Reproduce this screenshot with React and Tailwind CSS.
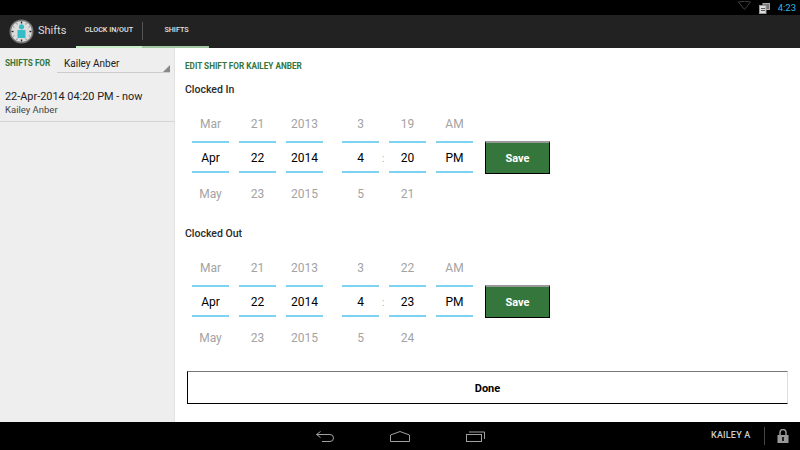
const font = { fontFamily: "Roboto, sans-serif" };

const majorTicks = [0, 90, 180, 270];
const minorTicks = [30, 60, 120, 150, 210, 240, 300, 330];

function Wheel({ top, mid, bottom }) {
  return (
    <div className="w-[37px] flex flex-col items-center">
      <div className="h-[35px] w-full flex items-center justify-center text-[12px] text-[#a3a3a3]">{top}</div>
      <div className="h-[32px] w-full pt-[2px] border-y-2 border-[#7dd3f0] flex items-center justify-center text-[12px] text-black">{mid}</div>
      <div className="h-[37px] w-full pt-[4px] flex items-center justify-center text-[12px] text-[#a3a3a3]">{bottom}</div>
    </div>
  );
}

function ShiftEditor({ title, date, time }) {
  return (
    <div className="h-[144px]">
      <div className="h-[18px] flex items-center text-[10.5px] font-medium text-[#2b2b2b]">{title}</div>
      <div className="flex items-start mt-[7px] pl-[7px]">
        <div className="flex gap-[10px]">
          {date.map((w, i) => <Wheel key={i} top={w[0]} mid={w[1]} bottom={w[2]} />)}
        </div>
        <div className="w-[19px]" />
        <div className="flex gap-[10px] relative">
          {time.map((w, i) => <Wheel key={i} top={w[0]} mid={w[1]} bottom={w[2]} />)}
          <span className="absolute left-[40px] top-[45px] text-[10px] text-[#aaaaaa]">:</span>
        </div>
        <button className="ml-[12px] mt-[35px] w-[65px] h-[33px] pt-[2px] bg-[#35763c] border border-black border-t-2 border-t-[#999999] text-white text-[11px] font-bold">Save</button>
      </div>
    </div>
  );
}

export default function App() {
  return (
    <div className="w-[800px] h-[450px] flex flex-col overflow-hidden bg-white" style={font}>
      {/* status bar */}
      <div className="h-[15px] bg-black flex items-center justify-end pr-[4px]">
        <svg width="13" height="9" viewBox="0 0 13 9" className="mb-[4px]">
          <path d="M0.5 1 Q6.5 -0.5 12.5 1 L6.5 8.5 Z" fill="none" stroke="#3f3f3f" />
        </svg>
        <svg width="11" height="11" viewBox="0 0 11 11" className="ml-[8px] mt-[1px]">
          <rect x="4" y="0.5" width="6.5" height="6" fill="#777777" stroke="#aaaaaa" />
          <rect x="0.5" y="2.5" width="6.5" height="8" fill="#dddddd" stroke="#999999" />
          <rect x="2" y="5" width="4" height="1" fill="#555555" />
          <rect x="2" y="7" width="4" height="1" fill="#555555" />
        </svg>
        <span className="ml-[8px] text-[9.5px] leading-none text-[#33b5e5]">4:23</span>
      </div>

      {/* action bar */}
      <div className="h-[33px] bg-[#222222] flex items-stretch">
        <div className="w-[76px] flex items-center pl-[9px] pb-[1px]">
          <svg width="25" height="25" viewBox="0 0 25 25" className="shrink-0">
            <circle cx="12.5" cy="12.5" r="12" fill="#777777" />
            <circle cx="12.5" cy="12.5" r="10.5" fill="#dcdcdc" />
            {minorTicks.map((a) => (
              <rect key={a} x="12" y="2.8" width="1" height="1.5" fill="#8a8a8a" transform={`rotate(${a} 12.5 12.5)`} />
            ))}
            {majorTicks.map((a) => (
              <rect key={a} x="11.8" y="2.5" width="1.4" height="2" fill="#222222" transform={`rotate(${a} 12.5 12.5)`} />
            ))}
            <circle cx="12.5" cy="7.8" r="2.6" fill="#35bcc6" />
            <rect x="8.5" y="11" width="8" height="8" fill="#35bcc6" />
          </svg>
          <span className="ml-[4px] text-[11px] text-[#dddddd]">Shifts</span>
        </div>
        <div className="w-[66px] flex items-center justify-center border-b-2 border-[#c6ecc8] text-[7.2px] font-medium text-[#e5e5e5]">CLOCK IN/OUT</div>
        <div className="w-[67px] flex items-center justify-center pl-[2px] border-b-2 border-[#9fc6a1] text-[7.2px] font-medium text-[#e5e5e5] relative">
          <span className="absolute left-0 top-[7px] h-[18px] w-px bg-[#555555]" />
          SHIFTS
        </div>
      </div>

      <div className="flex-1 flex min-h-0">
        {/* sidebar */}
        <div className="w-[175px] bg-[#eeeeee] border-r border-[#e2e2e2] flex flex-col">
          <div className="flex items-center h-[27px] pt-[4px]">
            <span className="ml-[5px] w-[45px] text-[8.2px] font-bold text-[#35763c] whitespace-nowrap">SHIFTS FOR</span>
            <div className="ml-[7px] w-[113px] h-[19px] border-b border-[#cccccc] relative flex items-center pl-[7px] text-[10px] text-[#222222]">
              Kailey Anber
              <span className="absolute right-0 bottom-0 w-0 h-0 border-l-[7px] border-l-transparent border-b-[7px] border-b-[#888888]" />
            </div>
          </div>
          <div className="h-[47px] border-b border-[#d4d4d4] pl-[5px] pt-[15px]">
            <div className="text-[10.9px] leading-[14px] text-[#222222]">22-Apr-2014 04:20 PM - now</div>
            <div className="text-[9.5px] leading-[12px] text-[#444444]">Kailey Anber</div>
          </div>
        </div>

        {/* content */}
        <div className="flex-1 pl-[10px] pt-[13px]">
          <div className="text-[8.2px] font-bold text-[#35763c] leading-[10px] whitespace-nowrap">EDIT SHIFT FOR KAILEY ANBER</div>
          <div className="mt-[10px]">
            <ShiftEditor
              title="Clocked In"
              date={[["Mar", "Apr", "May"], ["21", "22", "23"], ["2013", "2014", "2015"]]}
              time={[["3", "4", "5"], ["19", "20", "21"], ["AM", "PM", ""]]}
            />
            <ShiftEditor
              title="Clocked Out"
              date={[["Mar", "Apr", "May"], ["21", "22", "23"], ["2013", "2014", "2015"]]}
              time={[["3", "4", "5"], ["22", "23", "24"], ["AM", "PM", ""]]}
            />
          </div>
          <button className="block ml-[2px] mt-[2px] w-[601px] h-[33px] pt-[4px] bg-white border border-black border-t-[#777777] border-r-[#dddddd] text-[11px] font-bold text-black">Done</button>
        </div>
      </div>

      {/* nav bar */}
      <div className="h-[28px] bg-black flex items-center relative">
        <div className="absolute left-[316px] top-[9px] flex gap-[56px] items-center">
          <svg width="18" height="11" viewBox="0 0 18 11" fill="none" stroke="#a0a0a0" strokeWidth="1">
            <path d="M4.5 0.5 L0.5 3.5 L4.5 6.5 M0.5 3.5 H14 Q17.5 3.5 17.5 7 Q17.5 10.5 14 10.5 H6" />
          </svg>
          <svg width="20" height="11" viewBox="0 0 20 11" fill="none" stroke="#a0a0a0" strokeWidth="1">
            <path d="M0.5 4 L10 0.5 L19.5 4 V10.5 H0.5 Z" />
          </svg>
          <svg width="19" height="11" viewBox="0 0 19 11" fill="none" stroke="#a0a0a0" strokeWidth="1">
            <rect x="0.5" y="3.5" width="15" height="7" />
            <path d="M3 1 H18.5 V8" />
          </svg>
        </div>
        <span className="ml-[711px] text-[9px] font-medium text-[#cccccc] tracking-[0.2px]">KAILEY A</span>
        <span className="absolute left-[764px] top-[5px] h-[18px] w-px bg-[#444444]" />
        <svg width="12" height="14" viewBox="0 0 12 14" className="absolute left-[777px] top-[7px]">
          <path d="M3 6 V3.5 A3 3 0 0 1 9 3.5 V6" fill="none" stroke="#999999" strokeWidth="1.5" />
          <rect x="0.5" y="6" width="11" height="8" fill="#999999" />
          <rect x="5" y="8" width="2" height="4" fill="#222222" />
        </svg>
      </div>
    </div>
  );
}
